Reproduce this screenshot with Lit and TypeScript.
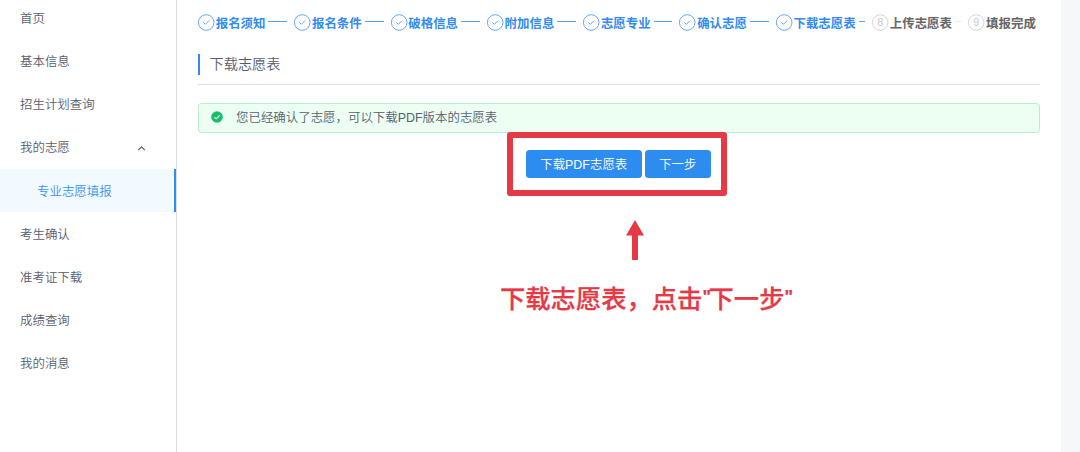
import { LitElement, html, css, svg } from "lit";
import { customElement } from "lit/decorators.js";
import { classMap } from "lit/directives/class-map.js";

interface MenuEntry {
  label: string;
  child?: boolean;
  open?: boolean;
}

const MENU: MenuEntry[] = [
  { label: "首页" },
  { label: "基本信息" },
  { label: "招生计划查询" },
  { label: "我的志愿", open: true },
  { label: "专业志愿填报", child: true },
  { label: "考生确认" },
  { label: "准考证下载" },
  { label: "成绩查询" },
  { label: "我的消息" },
];

const STEPS = [
  "报名须知",
  "报名条件",
  "破格信息",
  "附加信息",
  "志愿专业",
  "确认志愿",
  "下载志愿表",
  "上传志愿表",
  "填报完成",
];
const DONE_COUNT = 7;

@customElement("side-menu")
class SideMenu extends LitElement {
  static styles = css`
    :host {
      display: block;
      box-sizing: border-box;
      width: 177px;
      flex: none;
      border-right: 1px solid #dcdee2;
      background: #fff;
      overflow: hidden;
    }
    .list {
      display: flex;
      flex-direction: column;
      margin-top: -3.7px;
    }
    .item {
      display: flex;
      align-items: center;
      justify-content: space-between;
      box-sizing: border-box;
      height: 43.2px;
      padding: 2px 30px 0 20px;
      font-size: 12.45px;
      font-weight: 350;
      line-height: 18px;
      color: #575e70;
    }
    .child {
      padding-left: 37px;
      color: #3b92f2;
      background: #f0faff;
      border-right: 2px solid #2d8cf0;
    }
    .arrow {
      width: 9px;
      height: 9px;
      margin-top: 1px;
    }
  `;

  render() {
    return html`<div class="list">
      ${MENU.map(
        (m) => html`<div class=${classMap({ item: true, child: !!m.child })}>
          <span>${m.label}</span>
          ${m.open
            ? html`<svg class="arrow" viewBox="0 0 9 9" fill="none" stroke="#515a6e" stroke-width="1.1">
                <path d="M1.2 6.2 4.5 2.9 7.8 6.2" />
              </svg>`
            : null}
        </div>`
      )}
    </div>`;
  }
}

@customElement("step-bar")
class StepBar extends LitElement {
  static styles = css`
    :host {
      display: flex;
      height: 18px;
    }
    .step {
      display: flex;
      align-items: center;
      width: 96.3px;
      flex: none;
      color: #338bf2;
    }
    .step:last-child {
      width: auto;
    }
    .icon {
      width: 17px;
      height: 17px;
      flex: none;
    }
    .title {
      margin-left: 0.7px;
      flex: none;
      font-size: 12.45px;
      line-height: 18px;
      font-weight: 700;
      padding-top: 2px;
    }
    .tail {
      flex: 1;
      height: 1px;
      margin: 0 7px 2px 3px;
      background: #55a2f3;
    }
    .wait .title {
      color: #666;
    }
    .wait .tail {
      background: #e8eaec;
    }
    .num {
      font-family: "Liberation Sans", sans-serif;
      font-size: 10.7px;
    }
  `;

  render() {
    return STEPS.map((name, i) => {
      const wait = i >= DONE_COUNT;
      return html`<div class=${classMap({ step: true, wait })}>
        <svg class="icon" viewBox="0 0 17 17" fill="none">
          <circle cx="8.2" cy="8.5" r="7.8" stroke=${wait ? "#d4d4d4" : "#5fa8f4"} stroke-width="1" />
          ${wait
            ? svg`<text class="num" x="8.2" y="12" text-anchor="middle" fill="#c8c8c8">${i + 1}</text>`
            : svg`<path d="M5.4 8.5 7.4 10.3 11.2 6.5" stroke="#5fa8f4" stroke-width="1" />`}
        </svg>
        <span class="title">${name}</span>
        ${i < STEPS.length - 1 ? html`<span class="tail"></span>` : null}
      </div>`;
    });
  }
}

@customElement("app-root")
class AppRoot extends LitElement {
  static styles = css`
    :host {
      display: flex;
      width: 1080px;
      height: 452px;
      overflow: hidden;
      background: #f5f7f9;
      font-family: "Liberation Sans", "Noto Sans CJK SC", sans-serif;
      color: #575e70;
    }
    .main {
      width: 884px;
      box-sizing: border-box;
      padding: 13.5px 21px 0;
      background: #fff;
    }
    .heading {
      display: flex;
      align-items: center;
      box-sizing: border-box;
      height: 31px;
      margin-top: 22.5px;
      padding-bottom: 10px;
      border-bottom: 1px solid #dcdee2;
      font-size: 14.2px;
      font-weight: 350;
    }
    .heading-text {
      padding-bottom: 2px;
    }
    .bar {
      width: 2px;
      height: 21px;
      margin-right: 9.5px;
      background: #2d8cf0;
    }
    .alert {
      display: flex;
      align-items: center;
      box-sizing: border-box;
      height: 30px;
      margin-top: 17.6px;
      padding-left: 12px;
      border: 1px solid #b5efcd;
      border-radius: 3.5px;
      background: #edfff3;
      font-size: 12.45px;
      font-weight: 350;
    }
    .alert-text {
      padding-bottom: 2px;
    }
    .tick {
      width: 12px;
      height: 12px;
      margin: 0 13px 2px 0;
    }
    .frame {
      display: flex;
      align-items: flex-start;
      justify-content: center;
      gap: 3.5px;
      box-sizing: border-box;
      width: 219.5px;
      height: 64px;
      margin: -0.8px 0 0 309px;
      padding: 12px 0 0 3px;
      border: 6px solid #e63946;
      border-radius: 3px;
    }
    .btn {
      box-sizing: border-box;
      height: 28.5px;
      padding: 0;
      border: 0;
      border-radius: 3.5px;
      background: #2d8cf0;
      color: #fff;
      font-family: inherit;
      font-size: 12.45px;
      font-weight: 350;
      line-height: 30px;
      text-align: center;
    }
    .wide {
      width: 115.5px;
    }
    .narrow {
      width: 65.5px;
    }
    .arrow {
      display: block;
      width: 18px;
      height: 40px;
      margin: 24px 0 0 428.3px;
    }
    .note {
      margin: 21.2px 0 0 302px;
      color: #e63946;
      font-size: 25.3px;
      line-height: 37px;
      font-weight: 500;
      -webkit-text-stroke: 0.25px #e63946;
      white-space: nowrap;
    }
    .quote {
      font-weight: 700;
      font-size: 18px;
      line-height: 0;
      letter-spacing: -2.4px;
      vertical-align: 5px;
    }
  `;

  render() {
    return html`
      <side-menu></side-menu>
      <div class="main">
        <step-bar></step-bar>
        <div class="heading"><span class="bar"></span><span class="heading-text">下载志愿表</span></div>
        <div class="alert">
          <svg class="tick" viewBox="0 0 12 12">
            <circle cx="6" cy="6" r="5.8" fill="#19be6b" />
            <path d="M3.4 6.2 5.2 7.8 8.6 4.5" fill="none" stroke="#e6fff0" stroke-width="1.1" />
          </svg>
          <span class="alert-text">您已经确认了志愿，可以下载PDF版本的志愿表</span>
        </div>
        <div class="frame">
          <button class="btn wide">下载PDF志愿表</button>
          <button class="btn narrow">下一步</button>
        </div>
        <svg class="arrow" viewBox="0 0 18 40" fill="#e63946">
          <path d="M9 0 18 15.5H12V40H6V15.5H0Z" />
        </svg>
        <div class="note">下载志愿表，点击<span class="quote">"</span>下一步<span class="quote">"</span></div>
      </div>
    `;
  }
}
